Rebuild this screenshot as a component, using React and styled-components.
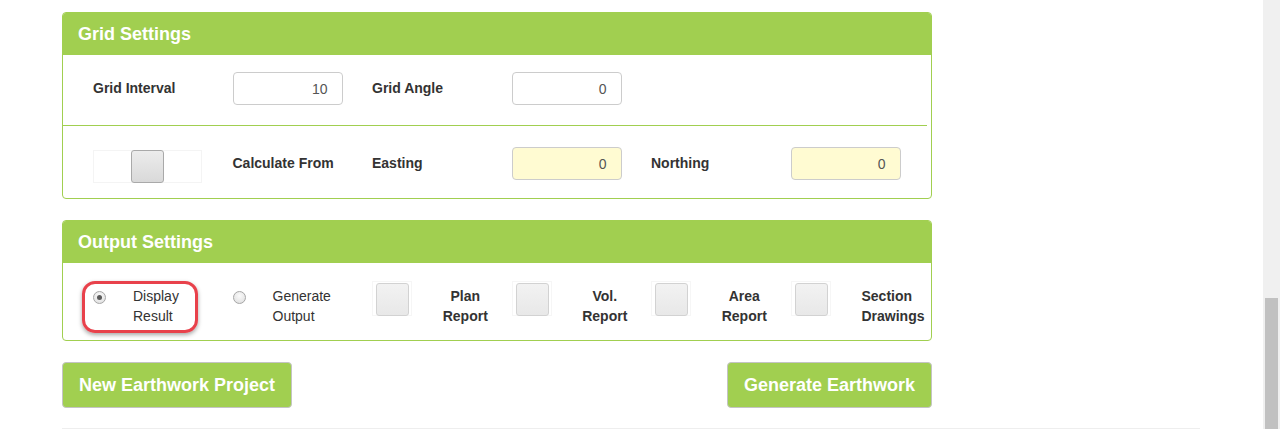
import React from 'react'
import styled, { createGlobalStyle } from 'styled-components'

const GREEN = '#a1cf50'

const GlobalStyle = createGlobalStyle`
  html, body {
    margin: 0;
    padding: 0;
    background: #fff;
    overflow: hidden;
  }
  body {
    font-family: "Liberation Sans", Arial, sans-serif;
    color: #333;
  }
`

const Page = styled.div`
  padding: 12px 0 0 62px;
  width: 1138px;
`

const Column = styled.div`
  width: 870px;
  display: flex;
  flex-direction: column;
  gap: 21px;
`

const Panel = styled.section`
  border: 1px solid ${GREEN};
  border-radius: 4px;
  background: #fff;
  overflow: hidden;
`

const PanelHeader = styled.h2`
  margin: -1px -1px 0;
  height: 43px;
  box-sizing: border-box;
  padding: 2px 0 0 16px;
  line-height: 41px;
  background: ${GREEN};
  color: #fff;
  font-size: 18px;
  font-weight: bold;
`

const Row = styled.div`
  display: grid;
  grid-template-columns: repeat(6, 139.5px);
  align-items: start;
  padding: ${p => p.$top}px 0 0 30px;
  height: ${p => p.$height}px;
  box-sizing: border-box;
`

const Divider = styled.div`
  height: 1px;
  margin-right: 4px;
  background: ${GREEN};
`

const Label = styled.span`
  font-size: 14px;
  font-weight: bold;
  line-height: 33px;
  white-space: nowrap;
`

const Input = styled.input`
  box-sizing: border-box;
  width: 110px;
  height: 33px;
  padding: 0 14px 0 8px;
  border: 1px solid #ccc;
  border-radius: 4px;
  background: ${p => (p.$yellow ? '#fffbd2' : '#fff')};
  font-family: "Liberation Sans", Arial, sans-serif;
  font-size: 14px;
  color: #555;
  text-align: right;
  outline: none;
`

const Toggle = styled.div`
  box-sizing: border-box;
  width: 109px;
  height: 33px;
  margin-top: 3px;
  border: 1px solid #f4f4f4;
  display: flex;
  justify-content: center;
`

const Knob = styled.div`
  box-sizing: border-box;
  width: 33px;
  height: 33px;
  margin-top: -1px;
  border: 1px solid #a9a9a9;
  border-radius: 3px;
  background: linear-gradient(#ececec, #d9d9d9);
`

const Option = styled.div`
  display: flex;
  align-items: flex-start;
`

const Radio = styled.span`
  box-sizing: border-box;
  width: 13px;
  height: 13px;
  margin-top: 10px;
  border-radius: 50%;
  border: 1px solid #a6a6a6;
  background: radial-gradient(circle at 50% 35%, #fafafa, #dcdcdc);
  display: flex;
  align-items: center;
  justify-content: center;
  flex-shrink: 0;

  &::after {
    content: '';
    width: 5px;
    height: 5px;
    border-radius: 50%;
    background: ${p => (p.$checked ? '#5a5a5a' : 'transparent')};
  }
`

const OptionText = styled.span`
  margin: 5px 0 0 27px;
  font-size: 14px;
  line-height: 20px;
`

const CheckWrap = styled.div`
  box-sizing: border-box;
  width: 40px;
  height: 35px;
  padding: 1px 0 0 3px;
  border: 1px solid #f6f6f6;
  flex-shrink: 0;
`

const CheckBox = styled.div`
  box-sizing: border-box;
  width: 33px;
  height: 33px;
  border: 1px solid #d2d2d2;
  border-radius: 3px;
  background: linear-gradient(#f2f2f2, #e8e8e8);
`

const CheckLabel = styled.span`
  flex: 1;
  margin-top: 5px;
  padding-left: ${p => (p.$left ? 31 : 7)}px;
  font-size: 14px;
  font-weight: bold;
  line-height: 20px;
  text-align: ${p => (p.$left ? 'left' : 'center')};
  white-space: nowrap;
`

const Highlight = styled.div`
  position: absolute;
  left: 82px;
  top: 281px;
  width: 116px;
  height: 52px;
  box-sizing: border-box;
  border: 3px solid #e8414b;
  border-radius: 13px;
  box-shadow: 0 2px 4px rgba(0, 0, 0, 0.35);
  pointer-events: none;
`

const Actions = styled.div`
  display: flex;
  justify-content: space-between;
`

const Button = styled.button`
  box-sizing: border-box;
  height: 46px;
  padding: 0 16px;
  border: 1px solid #c4c4c4;
  border-radius: 4px;
  background: ${GREEN};
  color: #fff;
  font-family: "Liberation Sans", Arial, sans-serif;
  font-size: 18px;
  font-weight: bold;
  cursor: pointer;
`

const Rule = styled.hr`
  margin: 20px 0 0;
  border: 0;
  border-top: 1px solid #eee;
`

const ScrollTrack = styled.div`
  position: fixed;
  top: 0;
  right: 0;
  width: 17px;
  height: 100%;
  background: #f0f0f0;
`

const ScrollThumb = styled.div`
  position: absolute;
  left: 2px;
  right: 2px;
  top: 298px;
  bottom: 0;
  background: #c1c1c1;
`

const reports = [
  ['Plan', 'Report'],
  ['Vol.', 'Report'],
  ['Area', 'Report'],
  ['Section', 'Drawings'],
]

export default function App() {
  return (
    <>
      <GlobalStyle />
      <Page>
        <Column>
          <Panel>
            <PanelHeader>Grid Settings</PanelHeader>
            <Row $top={17} $height={70}>
              <Label>Grid Interval</Label>
              <Input defaultValue='10' />
              <Label>Grid Angle</Label>
              <Input defaultValue='0' />
            </Row>
            <Divider />
            <Row $top={21} $height={72}>
              <Toggle>
                <Knob />
              </Toggle>
              <Label>Calculate From</Label>
              <Label>Easting</Label>
              <Input $yellow defaultValue='0' />
              <Label>Northing</Label>
              <Input $yellow defaultValue='0' />
            </Row>
          </Panel>

          <Panel>
            <PanelHeader>Output Settings</PanelHeader>
            <Row $top={18} $height={77}>
              <Option>
                <Radio $checked />
                <OptionText>Display<br />Result</OptionText>
              </Option>
              <Option>
                <Radio />
                <OptionText>Generate<br />Output</OptionText>
              </Option>
              {reports.map(([a, b], i) => (
                <Option key={a}>
                  <CheckWrap>
                    <CheckBox />
                  </CheckWrap>
                  <CheckLabel $left={i === reports.length - 1}>
                    {a}<br />{b}
                  </CheckLabel>
                </Option>
              ))}
            </Row>
          </Panel>

          <Actions>
            <Button>New Earthwork Project</Button>
            <Button>Generate Earthwork</Button>
          </Actions>
        </Column>
        <Rule />
      </Page>
      <Highlight />
      <ScrollTrack>
        <ScrollThumb />
      </ScrollTrack>
    </>
  )
}
